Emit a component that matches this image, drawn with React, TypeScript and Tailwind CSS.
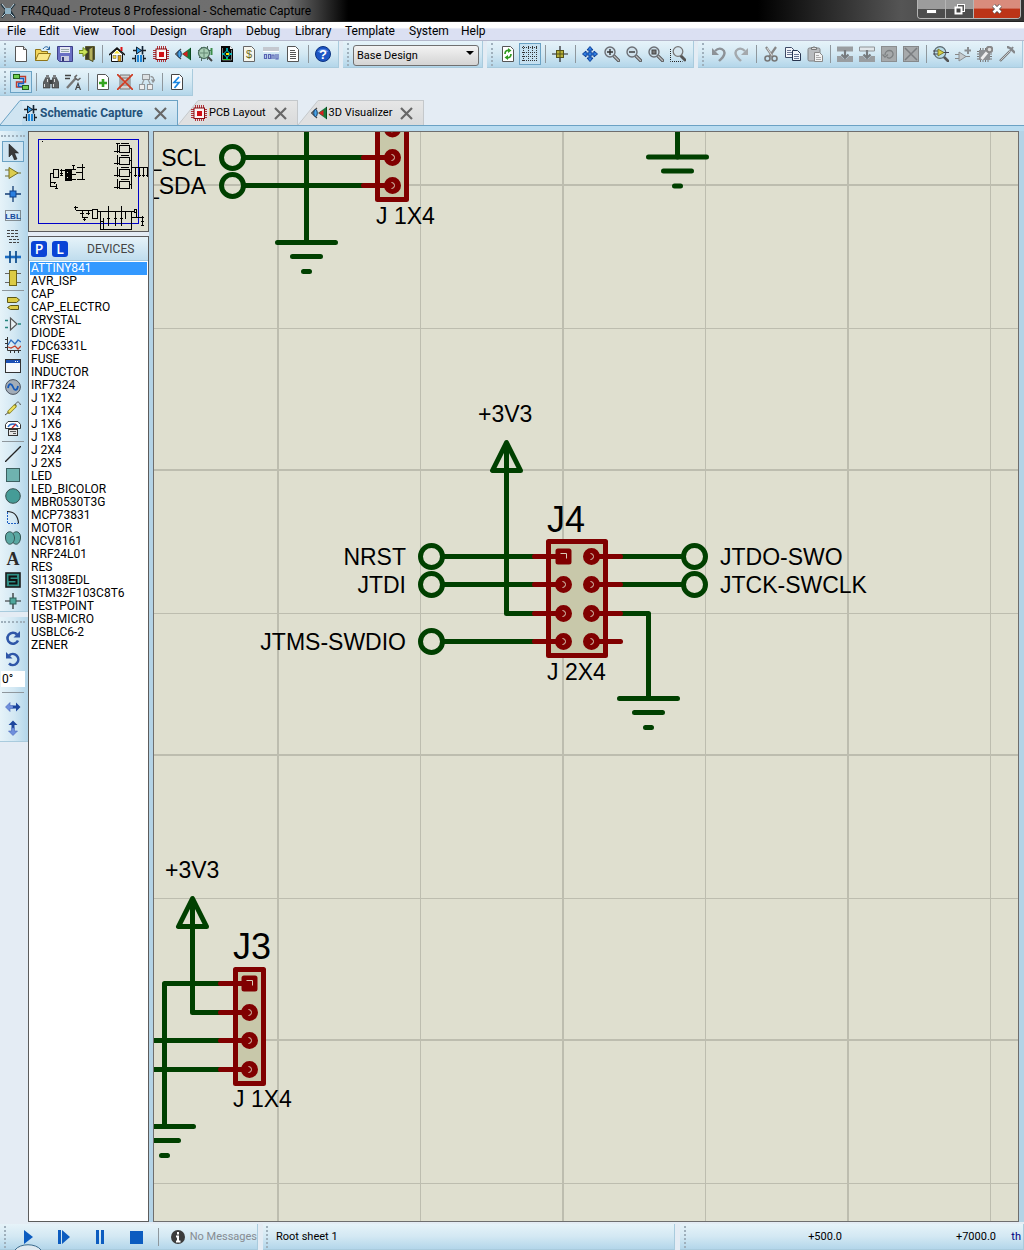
import React from "react";

type Kids = { children?: React.ReactNode };

function Ico({ children }: Kids) {
  return (
    <svg width="16" height="16" viewBox="0 0 16 16" fill="none" aria-hidden="true" className="block shrink-0">
      {children}
    </svg>
  );
}

const page = "M2.5 .5h8l3 3v12h-11z";

function Lens({ children }: Kids) {
  return (
    <Ico>
      <path d="M9.5 9.5l5 5" stroke="#555" strokeWidth="3.2" strokeLinecap="round" />
      <path d="M10 10l4.5 4.5" stroke="#b9bcc0" strokeWidth="1.4" strokeLinecap="round" />
      <circle cx="6" cy="6" r="5" fill="#cfe0ea" stroke="#6b6f75" strokeWidth="1.4" />
      {children}
    </Ico>
  );
}

function SchematicIcon() {
  return (
    <Ico>
      <path d="M2 4.500h13M1 12.500h4M12 12.500h3" stroke="#222" strokeWidth="1.400" />
      <path d="M5.500 1v7l5-3.500z" fill="#2f9be6" stroke="#123" />
      <path d="M11.500 0v8.500" stroke="#123" strokeWidth="1.600" />
      <path d="M4.500 9v7M12.500 9v7" stroke="#123" strokeWidth="1.200" />
      <rect x="6" y="9" width="2" height="7" fill="#1c86d8" />
      <rect x="9" y="9" width="2" height="7" fill="#1c86d8" />
    </Ico>
  );
}

function ChipIcon() {
  return (
    <Ico>
      <path d="M4.500 0v16M6.500 0v16M8.500 0v16M10.500 0v16M12.500 0v16M0 4.500h16M0 6.500h16M0 8.500h16M0 10.500h16M0 12.500h16" stroke="#b0343a" strokeWidth="1" />
      <rect x="3" y="3" width="10.500" height="10.500" fill="#fbf4f4" stroke="#8a0a10" />
      <rect x="6" y="6" width="5" height="5" fill="#d10f16" />
    </Ico>
  );
}

function ViewerIcon() {
  return (
    <Ico>
      <path d="M6 3L.5 8 6 13" stroke="#444" strokeWidth="1.200" />
      <ellipse cx="4.500" cy="8" rx="1.800" ry="3.500" fill="#4aa5e8" stroke="#123a66" />
      <path d="M7 8l9-6.500v13z" fill="#167a3a" />
      <path d="M7.500 8l5-3v6z" fill="#d31f1f" />
      <path d="M15.500 2v12" stroke="#0a4b20" />
    </Ico>
  );
}

const icons: Record<string, React.ReactNode> = {
  new: <Ico><path d={page} fill="#fff" stroke="#555" /><path d="M10.500 .5v3h3" stroke="#555" fill="#ddd" /></Ico>,
  open: <Ico><path d="M.5 14.500v-11h5l1 2h6v3" fill="#f2d65c" stroke="#8f7418" /><path d="M.5 14.500l3-7h12l-3 7z" fill="#fbe88a" stroke="#8f7418" /><path d="M8 3c2-3 5-3 6 0M14.500 .5v3h-3" stroke="#245f9c" /></Ico>,
  save: <Ico><path d="M.5 .5h15v15h-13l-2-2z" fill="#6a6fc4" stroke="#3d3f88" /><rect x="3" y="1" width="10" height="6" fill="#e6e9f5" /><path d="M4 3.500h8M4 5.500h8" stroke="#9aa" /><rect x="4" y="10" width="8" height="5" fill="#c9cce0" /><rect x="5" y="11" width="2" height="4" fill="#333a77" /></Ico>,
  exit: <Ico><path d="M6.500 .5h9v13h-9z" fill="#3c3c28" stroke="#5a5a30" /><path d="M10 3l4-2.500v15l-4-2z" fill="#b5b15c" stroke="#4a4a20" /><path d="M0 4.500h4v-3l5 4.500-5 4.500v-3h-4z" fill="#cbe458" stroke="#6f8a20" /></Ico>,
  home: <Ico><path d="M2.500 8v7.500h11V8L8 3z" fill="#fff" stroke="#111" /><path d="M0 9l8-7 8 7" stroke="#111" strokeWidth="1.500" /><path d="M12.500 1v4" stroke="#d11" strokeWidth="2" /><path d="M5 7.500l3-3 3 3z" fill="#f7e33a" /><rect x="4" y="9.500" width="3" height="3" fill="#f4d83a" stroke="#555" strokeWidth=".5" /><rect x="9" y="9.500" width="3" height="6" fill="#d9a018" stroke="#333" strokeWidth=".5" /></Ico>,
  schematic: <SchematicIcon />,
  chip: <ChipIcon />,
  viewer: <ViewerIcon />,
  gerber: <Ico><path d="M1 4.500h14M2 11.500h10M4.500 1v14M10.500 0v14" stroke="#50685c" /><circle cx="7" cy="7" r="5.500" fill="#a8cdb4" stroke="#4d7060" strokeWidth="1.300" /><path d="M3 7h8M7 3v8" stroke="#658873" /><path d="M11 11l4 4" stroke="#444" strokeWidth="2" /><path d="M14.500 2v7" stroke="#3b8d48" strokeWidth="2" /></Ico>,
  explorer: <Ico><path d="M2 0h9l3 3v13H2z" fill="#050505" /><path d="M3.500 2v12h9V4" stroke="#ccc" strokeWidth=".6" /><path d="M11 0v3h3" fill="#eee" /><path d="M8 2v3M8 11v3M3 8h3M10 8h3" stroke="#00d0d8" strokeWidth="1.500" /><path d="M8 4.500l3.500 3.500L8 11.500 4.500 8z" fill="#101010" stroke="#00e0e0" /><path d="M7 8h3" stroke="#ffe800" strokeWidth="2" /><path d="M4 13.500h7" stroke="#25d025" /></Ico>,
  bill: <Ico><path d={page} fill="#f6f6ee" stroke="#666" /><text x="8" y="12" textAnchor="middle" fontSize="11" fontFamily="Liberation Sans, sans-serif" fill="#6f6a20">$</text></Ico>,
  digits: <Ico><rect x="0" y="1" width="16" height="4" fill="#c4c8cf" /><path d="M0 5.500h16" stroke="#fff" /><path d="M1.500 8.500h2v4h-2zM5.500 8.500h2v4h-2zM9 13v-4h2v4M13 8v5h2v-5" stroke="#5964b4" strokeWidth="1.200" /></Ico>,
  notes: <Ico><path d={page} fill="#fff" stroke="#555" /><path d="M5 4.500h5M5 6.500h6M5 8.500h6M5 10.500h6M5 12.500h6" stroke="#555" /></Ico>,
  help: <Ico><circle cx="8" cy="8" r="7.500" fill="#1d55c4" stroke="#0b327f" /><path d="M2.500 6a6 5 0 0 1 11 0z" fill="#5f8ee6" /><text x="8" y="12.500" textAnchor="middle" fontSize="13" fontWeight="bold" fontFamily="Liberation Sans, sans-serif" fill="#fff">?</text></Ico>,
  refresh: <Ico><path d={page} fill="#fff" stroke="#555" /><path d="M5 8c0-3 2-4 4-3.500M11 8c0 3-2 4-4 3.500" stroke="#2f9a20" strokeWidth="1.700" /><path d="M8 2l3.500 2.500L8 7zM8 9l-3.500 2.500L8 14z" fill="#2f9a20" /></Ico>,
  grid: <Ico><path d="M1.500 0v16M6.500 0v16M10.500 0v16M14.500 0v16M0 1.500h16M0 6.500h16M0 10.500h16M0 14.500h16" stroke="#333" strokeWidth="1" strokeDasharray="1 1" /></Ico>,
  origin: <Ico><path d="M8 0v16M0 8h16" stroke="#222" strokeWidth="1.200" /><rect x="4.500" y="4.500" width="7" height="7" fill="#b9b23a" stroke="#55521a" /><path d="M8 5v6M5 8h6" stroke="#55521a" /></Ico>,
  pan: <Ico><path d="M8 .5l3 3.500H9v3h3V5l3.500 3-3.500 3V9H9v3h2l-3 3.500L5 12h2V9H4v2L.5 8 4 5v2h3V4H5z" fill="#2f7de0" stroke="#0d3f96" strokeWidth="1" /></Ico>,
  zin: <Lens><path d="M3 6h6M6 3v6" stroke="#333" strokeWidth="1.400" /></Lens>,
  zout: <Lens><path d="M3 6h6" stroke="#333" strokeWidth="1.400" /></Lens>,
  zall: <Lens><rect x="4" y="4" width="4" height="4" fill="#777" stroke="#444" /></Lens>,
  zarea: <Ico><path d="M.5 3v12.500h12" stroke="#222" strokeDasharray="1 1" /><path d="M11 10l4 4" stroke="#555" strokeWidth="3" strokeLinecap="round" /><circle cx="8" cy="5.500" r="4.800" fill="#d5e5ee" stroke="#777" strokeWidth="1.300" /></Ico>,
  undo: <Ico><path d="M4 5c5-5 11-1 9 4-1 3-3 4-5 6" stroke="#8d9297" strokeWidth="2.400" /><path d="M1 2v7h7z" fill="#8d9297" /></Ico>,
  redo: <Ico><path d="M12 5C7 0 1 4 3 9c1 3 3 4 5 6" stroke="#a4a9ad" strokeWidth="2.400" /><path d="M15 2v7H8z" fill="#a4a9ad" /></Ico>,
  cut: <Ico><path d="M3 1l7 10M13 1L6 11" stroke="#868686" strokeWidth="2.200" /><path d="M4 2l6 9" stroke="#ddd" /><circle cx="4.500" cy="12.500" r="2.500" stroke="#777" strokeWidth="1.600" /><circle cx="11.500" cy="12.500" r="2.500" stroke="#777" strokeWidth="1.600" /></Ico>,
  copy: <Ico><path d="M.5 1.500h6l2 2v8h-8z" fill="#f4f6fa" stroke="#3e4a66" /><path d="M2 4.500h4M2 6.500h5M2 8.500h5" stroke="#6b7694" /><path d="M7.500 4.500h5l3 3v7h-8z" fill="#f4f6fa" stroke="#28344f" /><path d="M9 8.500h5M9 10.500h5M9 12.500h5" stroke="#6b7694" /></Ico>,
  paste: <Ico><rect x="1" y="2" width="12" height="13" rx="1.500" fill="#b9bcbf" stroke="#808386" /><path d="M4.500 3.500v-2h2l.500-1 .500 1h2v2z" fill="#ddd" stroke="#777" /><path d="M7.500 6.500h5l3 3v6h-8z" fill="#f2f2f2" stroke="#888" /><path d="M9 9.500h3M9 11.500h5M9 13.500h5" stroke="#aaa" /></Ico>,
  blockcopy: <Ico><path d="M0 .5h16v5H0zM0 10h4l3 3h2l3-3h4v6H0z" fill="#999da0" /><path d="M8 4v8M4.500 8.500L8 12l3.500-3.500" stroke="#777b7e" strokeWidth="2.200" /></Ico>,
  blockmove: <Ico><path d="M.5 1h15v4H.5z" fill="#e0e6ea" stroke="#909497" /><path d="M0 10h4l3 3h2l3-3h4v6H0z" fill="#999da0" /><path d="M8 4v8M4.500 8.500L8 12l3.500-3.500" stroke="#777b7e" strokeWidth="2.200" /></Ico>,
  blockrot: <Ico><rect x=".5" y=".5" width="15" height="15" fill="#a6a9ab" stroke="#8b8e90" /><path d="M4 9c0-6 9-6 8 0-1 3-4 4-6 2M1.500 8.500L4 11l3-2.500" stroke="#7d8082" strokeWidth="1.300" /></Ico>,
  blockdel: <Ico><rect x=".5" y=".5" width="15" height="15" fill="#a6a9ab" stroke="#85888a" /><path d="M2 2l12 12M14 2L2 14" stroke="#7a7d80" strokeWidth="1.500" /></Ico>,
  pick: <Ico><path d="M10 10l5 5" stroke="#555" strokeWidth="2.600" strokeLinecap="round" /><circle cx="7" cy="6.500" r="5.800" fill="#b9dbe6" stroke="#5b6a70" strokeWidth="1.200" /><path d="M0 5h5M0 8h5M10 6.500h6" stroke="#445" /><path d="M5 3v7l6-3.500z" fill="#d5ce45" stroke="#6e6a1c" strokeWidth=".8" /></Ico>,
  makedev: <Ico><path d="M0 8.500h4M0 12.500h4M10 10.500h5" stroke="#888" strokeWidth="1.200" /><path d="M4 6v9l7-4.500z" fill="#c5cacd" stroke="#8a8e91" /><path d="M13 1v7M9.500 4.500h7" stroke="#8a8e91" strokeWidth="2" /></Ico>,
  pkg: <Ico><path d="M3.500 2v14M6 2v14M8.500 2v14M11 2v14M0 5.500h15M0 8h15M0 10.500h15M0 13h15" stroke="#777" /><rect x="2" y="4" width="11" height="10" fill="#8d9093" /><path d="M4.500 13L12 4" stroke="#eee" strokeWidth="2.800" /><circle cx="12.500" cy="3.500" r="2.800" stroke="#888" strokeWidth="2" fill="#ddd" /></Ico>,
  hammer: <Ico><path d="M1 15L11 5" stroke="#777" strokeWidth="2.400" /><path d="M1.500 14.500L11 5" stroke="#c5c8ca" /><path d="M8 1c3 0 4 2 8 6" stroke="#85888b" strokeWidth="2.400" /><path d="M11 5l3-4" stroke="#85888b" strokeWidth="2" /></Ico>,
  autoroute: <Ico><path d="M6 2.500h6.500v5.500h-9v5h6" stroke="#c03a2a" strokeWidth="1.400" /><path d="M6 4.500h4.500v5H5.500v3h4" stroke="#1a5ec0" strokeWidth="1.400" /><rect x=".5" y=".5" width="6" height="4" fill="#6fce50" stroke="#22601a" /><rect x="9.500" y="11.500" width="6" height="4" fill="#6fce50" stroke="#22601a" /></Ico>,
  find: <Ico><path d="M3 3h3l1 3v8H0V9zM13 3h-3L9 6v8h7V9z" fill="#5d6062" stroke="#333" strokeWidth=".6" /><rect x="6.500" y="6" width="3" height="4" fill="#3c3f41" /><rect x="3" y="1" width="3" height="3" fill="#7d8083" /><rect x="10" y="1" width="3" height="3" fill="#7d8083" /><path d="M1.500 10v3M10.500 10v3M4.500 5v3M11.500 5v3" stroke="#ddd" /></Ico>,
  property: <Ico><path d="M0 1.500h6M0 4.500h5" stroke="#444" strokeWidth="1.300" /><path d="M2 14L11 4" stroke="#777" strokeWidth="2.400" /><path d="M12 1l-2 2 1 2 2 1 2.500-2" stroke="#666" strokeWidth="1.600" /><path d="M10.500 16l2.500-6.500 2.500 6.500M11.500 13.500h3" stroke="#444" strokeWidth="1.200" /></Ico>,
  addsheet: <Ico><path d={page} fill="#fff" stroke="#555" /><path d="M8 5v8M4 9h8" stroke="#35a520" strokeWidth="2.600" /></Ico>,
  delsheet: <Ico><path d="M3 1h10v14H3z" fill="#d3d3d3" stroke="#777" /><path d="M5 4h6v7H5z" stroke="#777" /><path d="M0 0l16 16M16 0L0 16" stroke="#cf3b22" strokeWidth="1.700" /></Ico>,
  parent: <Ico><path d="M5 5.500L3 10.500M9 5.500l2.500 5" stroke="#9b9fa2" strokeWidth="1.300" /><rect x="3.500" y=".5" width="7" height="5" fill="#dde1e3" stroke="#929699" /><rect x=".5" y="10.500" width="5" height="5" fill="#eee" stroke="#929699" /><rect x="8.500" y="10.500" width="5" height="5" fill="#eee" stroke="#929699" /><path d="M11.500 2.500c3 0 3.500 2 2.500 4.500M12.500 5.500L14 8l2-2.500" stroke="#929699" strokeWidth="1.300" /></Ico>,
  erc: <Ico><path d={page} fill="#fff" stroke="#444" /><path d="M10 3L5 8.500h5L5.500 14" stroke="#1c86e0" strokeWidth="1.700" /></Ico>,
  select: <Ico><path d="M4 0v13l3-3 2.500 6 2.500-1-2.500-6h4z" fill="#3a3a3a" stroke="#111" strokeWidth=".5" /></Ico>,
  component: <Ico><path d="M0 5h4M0 11h4M12 8h4" stroke="#6b6b30" /><path d="M4 2.500v11L13 8z" fill="#dccd4e" stroke="#777022" /></Ico>,
  junction: <Ico><path d="M8 0v16M0 8h16" stroke="#123c74" strokeWidth="1.300" /><rect x="5" y="5" width="6" height="6" fill="#2a7fe0" stroke="#0e4189" /></Ico>,
  label: <Ico><rect x=".5" y="3.500" width="15" height="10" stroke="#333" strokeDasharray="1 1" /><text x="8" y="12" textAnchor="middle" fontSize="8" fontWeight="bold" fontFamily="Liberation Sans, sans-serif" fill="#154a9c">LBL</text></Ico>,
  script: <Ico><path d="M2 2.500h12M2 5.500h12M2 8.500h12M4 11.500h10M4 14.500h10" stroke="#444" strokeWidth="1.200" strokeDasharray="3 1" /></Ico>,
  bus: <Ico><path d="M0 8h16" stroke="#1c6dc4" strokeWidth="2.600" /><path d="M5 2v12M11 2v12" stroke="#12508f" strokeWidth="1.800" /></Ico>,
  sub: <Ico><path d="M0 3.500h4M0 12.500h4M12 3.500h4M12 12.500h4" stroke="#666" /><rect x="4.500" y=".5" width="7" height="15" fill="#dccb45" stroke="#6d6418" /></Ico>,
  terminal: <Ico><path d="M2.500 2.500h9l3 2.500-3 2.500h-9zM5.500 10.500h8v4h-8l-3-2z" fill="#dccb45" stroke="#5d5716" /></Ico>,
  pin: <Ico><path d="M0 4.500h3M0 11.500h3M13 8h3" stroke="#25857e" strokeWidth="1.400" /><path d="M5.500 2v12L12 8z" fill="#e9f1f4" stroke="#555" strokeWidth="1.200" /></Ico>,
  graph: <Ico><path d="M2.500 0v13.500H16M0 2.500h2M0 6.500h2M0 10.500h2M5.500 14v2M9.500 14v2M13.500 14v2" stroke="#333" /><path d="M3 8l3-5 4 4 3-4 3 2" stroke="#2f6fc0" strokeWidth="1.300" /><path d="M3 10l3 1 4-2 3 3 3-3" stroke="#c4402a" strokeWidth="1.300" /></Ico>,
  popup: <Ico><rect x=".5" y="1.500" width="15" height="13" fill="#f4f8fc" stroke="#333" /><rect x="1" y="2" width="14" height="3" fill="#1b4fb5" /><path d="M10 3.500h1M12 3.500h1" stroke="#fff" /></Ico>,
  generator: <Ico><circle cx="8" cy="8" r="7.400" fill="#a3adb8" stroke="#4c5560" /><path d="M3 9c1-6 4-4 5-1s4 5 5-1" stroke="#1559b8" strokeWidth="1.800" /></Ico>,
  probe: <Ico><path d="M0 15l4-3" stroke="#555" /><path d="M4 12l6-6" stroke="#8a8423" strokeWidth="3.600" strokeLinecap="round" /><path d="M4.500 11.500L9.500 6.500" stroke="#f0e25e" strokeWidth="2" strokeLinecap="round" /><path d="M10 5c2-4 4-4 5.500 0" stroke="#555" /></Ico>,
  meter: <Ico><path d="M.5 7.500v-4L3 .5h10l2.500 3v4z" fill="#fff" stroke="#333" /><path d="M3 6c2-4 8-4 10 0" stroke="#2a6cc4" strokeWidth="1.300" /><path d="M7 7l4-4" stroke="#c22" strokeWidth="1.300" /><rect x="3.500" y="8.500" width="9" height="6" fill="#e5e5e5" stroke="#333" /><path d="M5 10.500h6M8 12.500h3" stroke="#555" /></Ico>,
  line: <Ico><path d="M0 16L16 0" stroke="#222" strokeWidth="1.300" /></Ico>,
  box: <Ico><rect x="1.500" y="1.500" width="13" height="13" fill="#6fb3b0" stroke="#3c5f5f" /></Ico>,
  circle: <Ico><circle cx="8" cy="8" r="7.300" fill="#459c97" stroke="#37504f" /></Ico>,
  arc: <Ico><path d="M2.500 3v11.500H13" stroke="#1c5ec4" strokeDasharray="2 1" /><path d="M2 2.500c7 0 11 4 11.500 12" stroke="#222" strokeWidth="1.200" /></Ico>,
  path: <Ico><path d="M8 3.500C5 0 0 2 .5 8S5 16 8 12.500C11 16 15 14 15.500 8S11 0 8 3.500z" fill="#5aa8a3" stroke="#355352" /><path d="M8 4c2 2 2 6 0 8.500" stroke="#355352" /></Ico>,
  text: <Ico><text x="8" y="14" textAnchor="middle" fontSize="18" fontWeight="bold" fontFamily="Liberation Serif, serif" fill="#2b2b2b">A</text></Ico>,
  symbol: <Ico><rect x="1" y="1" width="14" height="14" fill="#2f8f86" stroke="#1b1b1b" strokeWidth="1.600" /><path d="M12 4.500H4.500V8h7v3.500H4" stroke="#111" strokeWidth="2" /></Ico>,
  marker: <Ico><path d="M8 0v16M0 8h16" stroke="#222" strokeWidth="1.200" /><rect x="5" y="5" width="6" height="6" fill="#4fa79c" stroke="#2f5c56" /></Ico>,
  cw: <Ico><path d="M12 4.500a5.500 5.500 0 1 0 1 6" stroke="#2f56a8" strokeWidth="2.600" /><path d="M15 1v6.500H8.500z" fill="#2f56a8" /></Ico>,
  ccw: <Ico><path d="M4 4.500a5.500 5.500 0 1 1 0 8" stroke="#2f56a8" strokeWidth="2.600" /><path d="M1 1v6.500h6.500z" fill="#2f56a8" /></Ico>,
  flipx: <Ico><path d="M8 6.500H5V3.500L.5 8 5 12.500V9.500h3z" fill="#6f8fdc" stroke="#4667b8" strokeWidth=".6" /><path d="M8 6.500h3V3.500L15.500 8 11 12.500V9.500H8z" fill="#1d469e" /></Ico>,
  flipy: <Ico><path d="M6.500 8V5H3.500L8 .5 12.500 5H9.500v3z" fill="#1d469e" /><path d="M6.500 8v3H3.500L8 15.500 12.500 11H9.500V8z" fill="#6f8fdc" stroke="#4667b8" strokeWidth=".6" /></Ico>,
};

function ToolButton({ name, active }: { name: string; active?: boolean }) {
  return (
    <button
      type="button"
      aria-label={name}
      className={
        active
          ? "flex h-[22px] w-[22px] shrink-0 items-center justify-center border border-[#6ba2c4] bg-[#c5e0f0]"
          : "flex h-[22px] w-[22px] shrink-0 items-center justify-center"
      }
    >
      {icons[name]}
    </button>
  );
}

const grip = "border-dotted border-[#9fb0bc]";
const bar = "flex items-center border-r border-b border-[#a9cbdd] bg-linear-to-b from-[#e6f3f9] via-[#d3e8f3] to-[#b3d6ea]";

function Strip({ items, active }: { items: string[]; active?: string }) {
  return (
    <div role="toolbar" className={`${bar} h-[27px] shrink-0 pr-1`}>
      <span className={`mr-1 ml-1 h-[23px] w-0.5 border-l-2 ${grip}`} />
      {items.map((n, i) =>
        n === "|" ? (
          <span key={i} className="flex w-2 justify-center">
            <span className="h-[18px] w-px bg-[#8e979d]" />
          </span>
        ) : (
          <ToolButton key={i} name={n} active={n === active} />
        )
      )}
    </div>
  );
}

function SideButton({ name, active }: { name: string; active?: boolean }) {
  return (
    <button
      type="button"
      aria-label={name}
      className={
        active
          ? "flex h-[21px] w-[22px] items-center justify-center border border-[#6ba2c4] bg-[#cfe4f1]"
          : "flex h-[21px] w-[22px] items-center justify-center"
      }
    >
      {icons[name]}
    </button>
  );
}

const sideBar =
  "flex flex-col items-center border-b border-[#a9cbdd] bg-linear-to-r from-[#e6f3f9] via-[#d3e8f3] to-[#b3d6ea] pr-0.5";

function SideTools() {
  const items = "select component junction label script bus sub | terminal pin graph popup generator probe meter | line box circle arc path text symbol marker".split(" ");
  return (
    <aside className="flex w-7 shrink-0 flex-col gap-[5px]">
      <div className={sideBar}>
        <span className={`mt-1 mb-1 h-0.5 w-6 border-t-2 ${grip}`} />
        {items.map((n, i) =>
          n === "|" ? (
            <span key={i} className="flex h-1 w-[22px] items-center">
              <span className="h-px w-full bg-[#8e979d]" />
            </span>
          ) : (
            <SideButton key={i} name={n} active={n === "select"} />
          )
        )}
      </div>
      <div className={`${sideBar} pb-[3px]`}>
        <span className={`mt-1 mb-1 h-0.5 w-6 border-t-2 ${grip}`} />
        <SideButton name="cw" />
        <SideButton name="ccw" />
        <input
          aria-label="Rotation angle"
          defaultValue="0°"
          className="my-[2px] h-4 w-6 bg-white px-px text-[12px] text-black"
        />
        <span className="my-[3px] h-px w-[22px] bg-[#8e979d]" />
        <SideButton name="flipx" />
        <SideButton name="flipy" />
      </div>
    </aside>
  );
}

function Tab({ icon, label, active }: { icon: React.ReactNode; label: string; active?: boolean }) {
  return (
    <div className="flex h-full">
      <svg width="22" height="25" viewBox="0 0 22 25" className="block h-full" preserveAspectRatio="none" aria-hidden="true">
        <path d="M0 25L20 .5H22V25z" fill={active ? "#cfe4f1" : "#dfe0e1"} />
        <path d="M0 25L20 .5H22" fill="none" stroke={active ? "#6ba2c4" : "#c4c8cb"} />
      </svg>
      <div
        className={
          active
            ? "flex items-center border-t border-r border-[#6ba2c4] bg-linear-to-b from-[#dcecf6] to-[#bddbed] pr-[10px]"
            : "flex items-center border-t border-r border-[#c4c8cb] bg-linear-to-b from-[#e6e6e6] to-[#d9dadb] pr-[10px]"
        }
      >
        <button type="button" className={active ? "flex items-center gap-[2px]" : "relative -ml-[9px] flex items-center gap-[2px]"}>
          {icon}
          <span
            className={
              active
                ? "w-[106px] text-left text-[12px] leading-4 font-bold whitespace-nowrap text-[#24527a]"
                : "text-left text-[11px] leading-4 whitespace-nowrap text-black"
            }
          >
            {label}
          </span>
        </button>
        <button type="button" aria-label={`Close ${label}`} className="ml-2">
          <svg width="13" height="13" viewBox="0 0 13 13" aria-hidden="true" className="block">
            <path d="M1 1l11 11M12 1L1 12" stroke="#686868" strokeWidth="2.200" />
          </svg>
        </button>
      </div>
    </div>
  );
}

function MiniMap() {
  return (
    <div className="h-[101px] shrink-0 border border-[#5c5c5c] bg-[#dfdfcf]">
      <svg viewBox="87 21 357 297" shapeRendering="crispEdges" className="block h-full w-full" fill="none" stroke="#000" strokeWidth="3" aria-label="Sheet overview">
        <rect x="115.500" y="43.500" width="300" height="252" stroke="#0000c8" />
        <path d="M125 49h4" />
        <path d="M160 134h15v23h-15zM152 145v26h16M152 171v14h16M162 171v7M169 178v15M165 190h8M160 145h-8M180 137h10M180 145h10M180 152h10M184 132v22M190 137h5v28M221 119v12M217 122h8M213 133h15M213 149h15M213 162h15M247 118v46M232 126h22M228 142h20M232 162h22" />
        <rect x="195" y="134" width="18" height="33" fill="#000" />
        <path d="M201 143h4M201 157h4" stroke="#dfdfcf" />
        {[60, 96, 132, 168].map((y) => (
          <g key={y}>
            <rect x="358" y={y} width="31" height="22" />
            <path d={`M343 ${y + 18}h15M352 ${y - 5}v28M362 ${y - 4}h24M389 ${y + 11}h7`} />
          </g>
        ))}
        <path d="M395 70v122M347 56h12M395 127h48M405 127v28M418 127v28M431 127v28M443 127v28M402 150h8M414 150h8M427 150h8M438 150h5" />
        <path d="M227 244v12M223 247h10M227 256h48M246 256v20M240 265h12M246 276h18M264 256v15M254 276v12M249 284h9M258 265h12M277 254h16v26h-16zM293 260h110M300 260v52M310 280v32M325 243v60M345 262v42M365 243v60M300 290h10M300 312h95M395 260v52M377 262v20M403 254h7v9h-7zM410 254v24M397 278h36M427 272v30M423 290h9M423 300h9M320 280h10M341 280h9M361 280h9" />
      </svg>
    </div>
  );
}

const devices =
  "ATTINY841,AVR_ISP,CAP,CAP_ELECTRO,CRYSTAL,DIODE,FDC6331L,FUSE,INDUCTOR,IRF7324,J 1X2,J 1X4,J 1X6,J 1X8,J 2X4,J 2X5,LED,LED_BICOLOR,MBR0530T3G,MCP73831,MOTOR,NCV8161,NRF24L01,RES,SI1308EDL,STM32F103C8T6,TESTPOINT,USB-MICRO,USBLC6-2,ZENER".split(",");

function DeviceList() {
  return (
    <section className="flex min-h-0 flex-1 flex-col border border-[#5c5c5c] bg-white">
      <header className="flex h-6 shrink-0 items-center gap-[5px] border-b border-[#a9cbdd] bg-linear-to-b from-[#e6f3f9] to-[#c0ddee] pl-[2px]">
        <button type="button" className="h-4 w-4 rounded-[3px] bg-[#0a44d6] font-['Open_Sans',sans-serif] text-[14px] leading-4 font-semibold text-white">P</button>
        <button type="button" className="h-4 w-4 rounded-[3px] bg-[#0a44d6] font-['Open_Sans',sans-serif] text-[14px] leading-4 font-semibold text-white">L</button>
        <h2 className="ml-[14px] text-[12px] leading-4 text-[#444]">DEVICES</h2>
      </header>
      <ul className="min-h-0 flex-1 overflow-hidden px-px pt-px text-[12px] leading-[13px] text-black">
        {devices.map((d, i) => (
          <li key={d} className={i === 0 ? "bg-[#3399ff] pl-px text-white" : "pl-px"}>
            {d}
          </li>
        ))}
      </ul>
    </section>
  );
}

const WIRE = "#004000";
const PART = "#800000";

function Pad({ x, y, square, left }: { x: number; y: number; square?: boolean; left?: boolean }) {
  const end = left ? x - 29 : x + 29;
  return (
    <g stroke={PART} strokeWidth="5">
      {square ? (
        <rect x={x - 5.5} y={y - 5.5} width="11" height="11" fill={PART} strokeLinejoin="round" />
      ) : (
        <circle cx={x} cy={y} r="6" fill={PART} />
      )}
      <path d={`M${x} ${y}H${end}`} strokeLinecap="round" />
      <path d={square ? `M${x - 3} ${y - 3}h6v5` : `M${x - 1} ${y - 3}a3 3 0 1 1 0 6`} fill="none" stroke="#d9cdb8" strokeWidth="1" />
    </g>
  );
}

function Ground({ x, y }: { x: number; y: number }) {
  return <path d={`M${x - 29} ${y}h58M${x - 14} ${y + 14}h28M${x - 3} ${y + 29}h6`} />;
}

function Power({ x, y }: { x: number; y: number }) {
  return <path d={`M${x} ${y}l-14 28h28z`} />;
}

function Schematic() {
  const pads2x4 = [556, 584, 613, 641];
  return (
    <main className="relative min-w-0 flex-1 overflow-hidden border border-[#6e6e6e] bg-[#dfdfcf]">
      <svg className="absolute inset-0 h-full w-full" aria-label="Schematic sheet">
        <g transform="translate(-154 -132)">
          <g stroke="#bdbdaf">
            <path strokeWidth="2" d="M278 132V1221M563 132V1221M848 132V1221M154 185H1018M154 470H1018M154 755H1018M154 1040H1018" />
            <path strokeWidth="1" d="M420.500 132V1221M705.500 132V1221M990.500 132V1221M154 328.500H1018M154 613.500H1018M154 898.500H1018M154 1183.500H1018" />
          </g>
          <g fill="#c8c8aa" stroke={PART} strokeWidth="5" strokeLinejoin="round">
            <rect x="377.500" y="100" width="29" height="99.500" />
            <rect x="548.500" y="541.500" width="57" height="114" />
            <rect x="235.500" y="969.500" width="28" height="114" />
          </g>
          <g fill="none" stroke={WIRE} strokeWidth="5" strokeLinecap="round" strokeLinejoin="round">
            <path d="M245 157.500H363M245 185.500H363M306.500 120V242M677.500 120V157" />
            <path d="M444 556.500H534M444 584.500H534M444 641.500H534M506.500 446V613.500H534M621 556.500H681M621 584.500H681M621 613.500H648.500V698" />
            <path d="M192.500 902V1012.500H220M220 983.500H164.500V1126M140 1040.500H220M140 1069.500H220" />
            <circle cx="232.500" cy="157.500" r="11" />
            <circle cx="232.500" cy="185.500" r="11" />
            {[556.5, 584.5, 641.5].map((y) => <circle key={y} cx="431.500" cy={y} r="11" />)}
            {[556.5, 584.5].map((y) => <circle key={y} cx="694.500" cy={y} r="11" />)}
            <Power x={506.5} y={442.5} />
            <Power x={192.5} y={898.5} />
            <Ground x={306.5} y={242.5} />
            <Ground x={677.5} y={157} />
            <Ground x={648.5} y={698.5} />
            <Ground x={164.5} y={1126.5} />
          </g>
          <Pad x={392.500} y={129} left />
          <Pad x={392.500} y={157.500} left />
          <Pad x={392.500} y={185.500} left />
          {pads2x4.map((y, i) => (
            <g key={y}>
              <Pad x={563.500} y={y + 0.5} square={i === 0} left />
              <Pad x={591.500} y={y + 0.5} />
            </g>
          ))}
          {[983.5, 1012.5, 1040.5, 1069.5].map((y, i) => <Pad key={y} x={249.500} y={y} square={i === 0} left />)}
          <g fontFamily="Liberation Sans, Arial, sans-serif" fontSize="23" fill="#000">
            <text x="206" y="166" textAnchor="end">_SCL</text>
            <text x="206" y="194" textAnchor="end">_SDA</text>
            <text x="376" y="224">J 1X4</text>
            <text x="478" y="422">+3V3</text>
            <text x="406" y="565" textAnchor="end">NRST</text>
            <text x="406" y="593" textAnchor="end">JTDI</text>
            <text x="406" y="650" textAnchor="end">JTMS-SWDIO</text>
            <text x="720" y="565">JTDO-SWO</text>
            <text x="720" y="593">JTCK-SWCLK</text>
            <text x="547" y="680">J 2X4</text>
            <text x="165" y="878">+3V3</text>
            <text x="233" y="1107">J 1X4</text>
            <text x="547" y="532" fontSize="36">J4</text>
            <text x="233" y="959" fontSize="36">J3</text>
          </g>
        </g>
      </svg>
    </main>
  );
}

function TitleBar() {
  return (
    <header className="flex h-[21px] shrink-0 items-center justify-between bg-[linear-gradient(90deg,#6c6c6c_0%,#707070_28%,#3a3a3a_31%,#000_34%,#000_74%,#555_88%,#333_100%)]">
      <div className="flex h-full items-center gap-[5px] pr-2">
        <Ico>
          <path d="M1 1l5 6-4 8M15 1l-5 6 5 8M2 3l11 10M13 3L3 13" stroke="#1f333f" strokeWidth="1.500" />
          <path d="M2 1l4 5M14 1l-4 5M2 14l3-3M14 14l-3-3" stroke="#c5dbe6" />
          <rect x="5" y="5" width="6" height="6" fill="#8fb2c4" />
        </Ico>
        <h1 className="text-[12px] leading-4 whitespace-nowrap text-black">FR4Quad - Proteus 8 Professional - Schematic Capture</h1>
      </div>
      <div className="mr-[3px] flex h-[19px] self-start overflow-hidden rounded-b-[4px] border border-t-0 border-[#b5b5b5]">
        <button type="button" aria-label="Minimize" className="flex w-7 items-center justify-center border-r border-[#b5b5b5] bg-linear-to-b from-[#9c9c9c] from-50% to-[#4d4d4d] to-50%">
          <svg width="13" height="13" viewBox="0 0 13 13" aria-hidden="true"><rect x="1.500" y="6.500" width="10" height="4" fill="#fff" stroke="#555" /></svg>
        </button>
        <button type="button" aria-label="Restore" className="flex w-7 items-center justify-center border-r border-[#b5b5b5] bg-linear-to-b from-[#9c9c9c] from-50% to-[#4d4d4d] to-50%">
          <svg width="13" height="13" viewBox="0 0 13 13" aria-hidden="true">
            <rect x="4.500" y="1.500" width="7" height="7" fill="#555" stroke="#fff" />
            <rect x="2.500" y="4.500" width="6" height="6" fill="#444" stroke="#fff" strokeWidth="2" />
          </svg>
        </button>
        <button type="button" aria-label="Close" className="flex w-[46px] items-center justify-center bg-linear-to-b from-[#d98c7c] from-45% to-[#bc3418] to-50%">
          <svg width="13" height="13" viewBox="0 0 13 13" aria-hidden="true">
            <path d="M2.500 2.500l7 7M9.500 2.500l-7 7" stroke="#555" strokeWidth="4" />
            <path d="M2.500 2.500l7 7M9.500 2.500l-7 7" stroke="#fff" strokeWidth="2.600" />
          </svg>
        </button>
      </div>
    </header>
  );
}

const menus: [string, string][] = [
  ["File", "w-8"], ["Edit", "w-[34px]"], ["View", "w-[39px]"], ["Tool", "w-[38px]"], ["Design", "w-[50px]"], ["Graph", "w-[46px]"],
  ["Debug", "w-[49px]"], ["Library", "w-[50px]"], ["Template", "w-[64px]"], ["System", "w-[52px]"], ["Help", "w-10"],
];

function StatusBar() {
  const blue = "#0c5cc0";
  return (
    <footer className="flex h-[26px] shrink-0 gap-[5px] text-[11px] leading-4">
      <div className={`${bar} w-[258px] shrink-0`}>
        <span className={`ml-1 h-[22px] w-0.5 border-l-2 ${grip}`} />
        <div className="ml-1 flex items-center">
          {[
            ["Play", "M4 1v14l9-7z"],
            ["Step", "M2 1h3v14H2zM6 1v14l8-7z"],
            ["Pause", "M4 1h3v14H4zM9 1h3v14H9z"],
            ["Stop", "M2 2h13v13H2z"],
          ].map(([n, d]) => (
            <button key={n} type="button" aria-label={n} className="relative flex w-9 justify-center">
              <svg width="16" height="16" viewBox="0 0 16 16" aria-hidden="true"><path d={d} fill={blue} /></svg>
              {n === "Play" && (
                <svg width="28" height="6" viewBox="0 0 28 6" className="absolute -bottom-[5px] left-1" aria-hidden="true">
                  <path d="M1 6C6-1 22-1 27 6" fill="#dfe9ef" stroke="#3a6a8c" />
                </svg>
              )}
            </button>
          ))}
        </div>
        <span className="mx-1 h-[18px] w-px bg-[#8e979d]" />
        <svg width="14" height="14" viewBox="0 0 14 14" aria-hidden="true" className="mr-[5px] ml-2 shrink-0">
          <circle cx="7" cy="7" r="7" fill="#3c3c3c" />
          <path d="M7 2v2.500M5 6.500h2V11M5 11.500h4.500" stroke="#fff" strokeWidth="2" fill="none" />
        </svg>
        <span className="whitespace-nowrap text-[#868c92]">No Messages</span>
      </div>
      <div className={`${bar} min-w-0 flex-1`}>
        <span className={`mr-2 ml-[3px] h-[22px] w-0.5 border-l-2 ${grip}`} />
        <span className="whitespace-nowrap text-black">Root sheet 1</span>
      </div>
      <div className={`${bar} w-[344px] shrink-0 pr-[2px]`}>
        <span className={`ml-1 h-[22px] w-0.5 border-l-2 ${grip}`} />
        <span className="w-[156px] text-right text-black">+500.0</span>
        <span className="w-[154px] text-right text-black">+7000.0</span>
        <span className="flex-1 text-right text-[#000080]">th</span>
      </div>
    </footer>
  );
}

export default function App() {
  return (
    <div className="flex h-screen flex-col overflow-hidden bg-[#e4ecf4] font-[Roboto,sans-serif] text-black">
      <TitleBar />
      <nav className="flex h-5 shrink-0 items-center border-t border-b border-t-[#222] border-b-[#b4b8cc] bg-linear-to-b from-white from-30% to-[#dbe0f2] to-40% pl-[7px] text-[12px] leading-4">
        {menus.map(([m, w]) => (
          <button key={m} type="button" className={`${w} shrink-0 text-left`}>{m}</button>
        ))}
      </nav>
      <div className="flex shrink-0 gap-1">
        <Strip items={["new", "open", "save", "exit", "|", "home", "schematic", "chip", "viewer", "gerber", "explorer", "bill", "digits", "notes", "|", "help"]} />
        <div className={`${bar} h-[27px] w-[140px] shrink-0`}>
          <span className={`mr-1 ml-1 h-[23px] w-0.5 border-l-2 ${grip}`} />
          <div className="relative w-[126px]">
            <select aria-label="Design variant" className="h-[21px] w-full appearance-none rounded-[3px] border border-[#707070] bg-linear-to-b from-[#f3f3f3] to-[#d4d4d4] px-[3px] text-[11px] leading-4 text-black">
              <option>Base Design</option>
            </select>
            <svg width="8" height="4" viewBox="0 0 8 4" className="pointer-events-none absolute top-[9px] right-[5px]" aria-hidden="true"><path d="M0 0h8L4 4z" /></svg>
          </div>
        </div>
        <Strip active="grid" items={["refresh", "grid", "|", "origin", "|", "pan", "zin", "zout", "zall", "zarea"]} />
        <Strip items={["undo", "redo", "|", "cut", "copy", "paste", "|", "blockcopy", "blockmove", "blockrot", "blockdel", "|", "pick", "makedev", "pkg", "hammer"]} />
      </div>
      <div className="mt-px flex shrink-0">
        <Strip active="autoroute" items={["autoroute", "|", "find", "property", "|", "addsheet", "delsheet", "parent", "|", "erc"]} />
      </div>
      <div className="mt-1 flex h-[25px] shrink-0">
        <Tab active icon={<SchematicIcon />} label="Schematic Capture" />
        <Tab icon={<ChipIcon />} label="PCB Layout" />
        <Tab icon={<ViewerIcon />} label="3D Visualizer" />
      </div>
      <div className="h-[6px] shrink-0 border-t border-[#6ba2c4] bg-[#b9dcf0]" />
      <div className="flex min-h-0 flex-1">
        <SideTools />
        <div className="flex w-[121px] shrink-0 flex-col gap-1">
          <MiniMap />
          <DeviceList />
        </div>
        <div className="w-1 shrink-0 bg-[#b4d3e6]" />
        <Schematic />
        <div className="w-[5px] shrink-0 bg-[#b4d3e6]" />
      </div>
      <div className="h-0.5 shrink-0" />
      <StatusBar />
    </div>
  );
}
